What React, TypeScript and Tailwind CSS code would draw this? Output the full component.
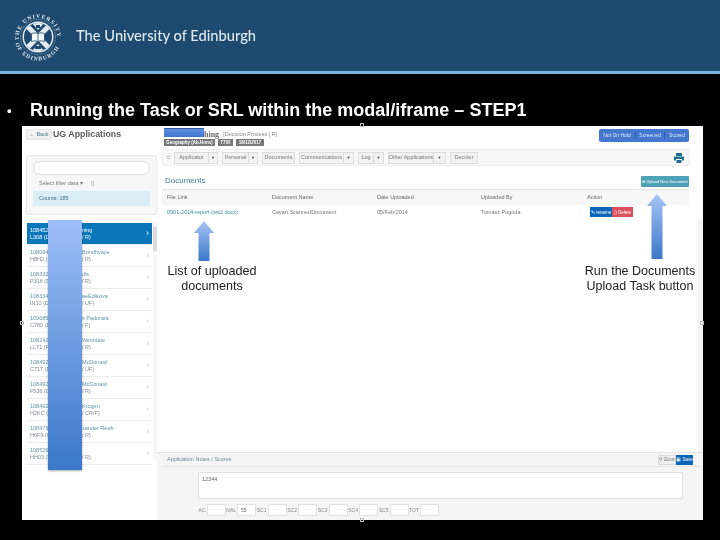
import React from "react";

const rows = [
  ["108452", "ning", "L308 (De", "/ R)"],
  ["1080946", "Bondhyaye", "H8H2 (B", "/ R)"],
  ["1083321", "dis", "P316 (De", "/ R)"],
  ["1083347", "aeEdikova", "IN10 (Di", "/ UF)"],
  ["1096854", "s Padorara", "C780 (De", "/ F)"],
  ["1082423", "Wetzdate", "LL71 (Re", "/ R)"],
  ["1084925", "McDonaid", "C717 (De", "/ UF)"],
  ["1084925", "McDonaid", "F536 (De", "/ R)"],
  ["1084927", "Krogen", "H2KC (D", "/ CR/F)"],
  ["1084736", "xander Reeb", "H6F9 (Ge", "/ R)"],
  ["1085267", "", "HH03 (T", "/ R)"],
];
const tools: { label: string; main: string; drop: string }[] = [
  { label: "Applicator", main: "w-[35px]", drop: "w-[9px]" },
  { label: "Personal", main: "w-[27px]", drop: "w-[9px]" },
  { label: "Documents", main: "w-[33px]", drop: "" },
  { label: "Communications", main: "w-[45px]", drop: "w-[10px]" },
  { label: "Log", main: "w-[16px]", drop: "w-[10px]" },
  { label: "Other Applications", main: "w-[46px]", drop: "w-[12px]" },
  { label: "Decider", main: "w-[28px]", drop: "" },
];
const scores: [string, string][] = [
  ["AC", ""],
  ["NAL", "55"],
  ["SC1", ""],
  ["SC2", ""],
  ["SC3", ""],
  ["SC4", ""],
  ["SC5", ""],
  ["TOT", ""],
];

function Seal() {
  return (
    <svg width="54" height="54" viewBox="0 0 54 54" className="shrink-0 mt-[3px]">
      <defs>
        <path id="sealTop" d="M8 30A19.200 19.200 0 1 1 46 30" />
        <path id="sealBottom" d="M4.400 33.500A23.500 23.500 0 0 0 49.600 33.500" />
        <clipPath id="sealClip"><circle cx="27" cy="27" r="14" /></clipPath>
      </defs>
      <text fontSize="5.600" fontWeight="700" fill="#e3ebf1" fontFamily="'Liberation Serif', serif">
        <textPath href="#sealTop" textLength="62">THE UNIVERSITY</textPath>
      </text>
      <text fontSize="5.600" fontWeight="700" fill="#e3ebf1" fontFamily="'Liberation Serif', serif">
        <textPath href="#sealBottom" textLength="56">OF EDINBURGH</textPath>
      </text>
      <circle cx="27" cy="27" r="17.500" fill="none" stroke="#dfe8ef" strokeWidth="0.5" strokeDasharray="0.8 0.8" />
      <circle cx="27" cy="27" r="15.500" fill="#e6edf2" />
      <g clipPath="url(#sealClip)">
        <rect x="10" y="10" width="34" height="34" fill="#1f4a70" />
        <path d="M11 11L43 43M43 11L11 43" stroke="#e6edf2" strokeWidth="5" />
        <path d="M21 13L27 20L33 13zM21 41L27 34L33 41z" fill="#e6edf2" />
        <path d="M25 15h4v3h-4zM24 36h6v3h-6z" fill="#1f4a70" />
      </g>
      <path d="M20.500 23.500q3.500-1.500 6.500 0q3-1.500 6.500 0v8q-3.500-1.500-6.500 0q-3-1.500-6.500 0z" fill="#f5f8fa" stroke="#1f4a70" strokeWidth="0.8" />
      <path d="M27 23.500v8" stroke="#1f4a70" strokeWidth="0.8" />
    </svg>
  );
}

function Arrow({ className, h }: { className: string; h: number }) {
  return (
    <svg width="20" height={h} viewBox={`0 0 20 ${h}`} className={className}>
      <defs>
        <linearGradient id={`ar${h}`} x1="0" y1="0" x2="0" y2="1">
          <stop offset="0" stopColor="#a6c4f4" />
          <stop offset="1" stopColor="#3c78c8" />
        </linearGradient>
      </defs>
      <path d={`M10 0L20 12H15.500V${h}H4.500V12H0Z`} fill={`url(#ar${h})`} />
    </svg>
  );
}

function Handle({ className }: { className: string }) {
  return <div className={`absolute w-[4px] h-[4px] border border-[#bbb] ${className}`} />;
}

export default function App() {
  return (
    <div className="relative w-[720px] h-[540px] bg-black overflow-hidden font-['Liberation_Sans',sans-serif] blur-[0.3px]">
      <header className="h-[71px] bg-[#1f4a70] flex items-center pl-[11px] gap-[11px]">
        <Seal />
        <span className="font-['Lato',sans-serif] text-[14.700px] text-[#dfe8ef] font-medium">The University of Edinburgh</span>
      </header>
      <div className="h-[3px] bg-[#7db4de]" />
      <div className="h-[52px] pt-[20px] pl-[7px] flex items-center text-white font-bold text-[18px] leading-none">
        <span className="w-[23px] text-[13px]">•</span>
        <span>Running the Task or SRL within the modal/iframe – STEP1</span>
      </div>

      <main className="ml-[22px] w-[681px] h-[394px] bg-white flex text-[#777] text-[5.500px] leading-[7px]">
        {/* left column */}
        <aside className="w-[135px] shrink-0 flex flex-col pl-[4px]">
          <div className="flex items-start gap-[1px] pt-[3px] h-[25px]">
            <span className="w-[26px] h-[11px] bg-[#f2f2f2] border border-[#e5e5e5] rounded-[1px] flex items-center justify-center text-[#4c7f93]">← Back</span>
            <span className="text-[8.800px] leading-[10px] font-bold text-[#5c5c5c]">UG Applications</span>
          </div>
          <div className="mt-[4px] w-[131px] h-[60px] bg-[#f7f7f7] border border-[#e8e8e8] rounded-[2px] px-[6px] pt-[5px] flex flex-col">
            <div className="h-[14px] bg-white border border-[#ddd] rounded-[7px]" />
            <div className="h-[16px] flex items-center gap-[8px] pl-[6px] text-[#777]">
              <span>Select filter data ▾</span>
              <span>▯</span>
            </div>
            <div className="h-[15px] bg-[#d9edf7] flex items-center pl-[6px] text-[#42707f]">Counts: 185</div>
          </div>
          <div className="mt-[8px] flex">
            <div className="w-[125px] ml-[1px]">
              {rows.map((r, i) => (
                <div key={i} className={`h-[22px] flex items-center pl-[3px] pr-[3px] border-b border-[#ececec] ${i === 0 ? "bg-[#0b77bb] text-white" : "text-[#7a8f99]"}`}>
                  <div className="grid grid-cols-[52px_1fr] flex-1">
                    <span className={i === 0 ? "" : "text-[#5f97a8]"}>{r[0]}</span>
                    <span className={i === 0 ? "" : "text-[#5f97a8]"}>{r[1]}</span>
                    <span>{r[2]}</span>
                    <span>{r[3]}</span>
                  </div>
                  <span className={`text-[9px] ${i === 0 ? "text-white" : "text-[#c4c4c4]"}`}>›</span>
                </div>
              ))}
            </div>
            <div className="w-[4px] h-[237px] bg-[#f6f6f6] ml-[1px]">
              <div className="w-[4px] h-[24px] mt-[4px] bg-[#dcdcdc]" />
            </div>
          </div>
        </aside>

        {/* right column */}
        <section className="flex-1 flex flex-col min-w-0">
          <div className="h-[23px] shrink-0 flex justify-between pl-[7px] pr-[14px] pt-[3px]">
            <div className="flex flex-col">
              <div className="h-[10px] pl-[40px] flex items-center text-[#888]">
                <span className="font-['Liberation_Serif',serif] text-[8px] font-bold text-[#666] mr-[4px]">hing</span>
                [Decision Process | R]
              </div>
              <div className="flex gap-[3px]">
                {[["Geography (Ab.Hons)", "w-[51px]"], ["T700", "w-[15px]"], ["18/12/2017", "w-[28px]"]].map(([b, w]) => (
                  <span key={b} className={`h-[7px] ${w} text-center whitespace-nowrap overflow-hidden bg-[#777] text-white text-[4.500px] leading-[7px] font-bold`}>{b}</span>
                ))}
              </div>
            </div>
            <div className="flex h-[13px] bg-[#4478d0] rounded-[2px] text-[#dbe6f7] text-[5px] items-center">
              <span className="w-[37px] text-center border-r border-[#2f5ca8]">Not On Hold</span>
              <span className="w-[29px] text-center border-r border-[#2f5ca8]">Screened</span>
              <span className="w-[24px] text-center">Scored</span>
            </div>
          </div>

          <div className="ml-[5px] mr-[13px] h-[17px] shrink-0 bg-[#f8f8f8] border border-[#eee] rounded-[2px] flex items-center pl-[3px] pr-[5px] gap-[4px] text-[5.500px]">
            <span className="w-[4px] text-[#999] text-[8px]">=</span>
            {tools.map((t) => (
              <span key={t.label} className="flex">
                <span className={`h-[12px] ${t.main} whitespace-nowrap bg-[#f2f2f2] border border-[#ddd] flex items-center justify-center`}>{t.label}</span>
                {t.drop && <span className={`h-[12px] ${t.drop} bg-[#f2f2f2] border border-[#ddd] border-l-0 flex items-center justify-center text-[#444] text-[4px]`}>▼</span>}
              </span>
            ))}
            <svg width="10" height="10" viewBox="0 0 10 10" className="ml-auto">
              <path d="M2 0h6v3H2zM0 3.500h10v4H8V6H2v1.500H0zM2.500 7h5v3h-5z" fill="#1f6f8f" />
            </svg>
          </div>

          <div className="h-[23px] shrink-0 flex items-end justify-between pl-[8px] pr-[14px] pb-[2px]">
            <span className="text-[8px] leading-[12px] text-[#3f7f93]">Documents</span>
            <span className="w-[48px] h-[11px] bg-[#4fa3b8] rounded-[1px] text-white text-[4px] flex items-center justify-center whitespace-nowrap">⊞ Upload New Document</span>
          </div>
          <div className="ml-[5px] mr-[14px] h-[16px] shrink-0 bg-[#f7f7f7] border-t border-[#e5e5e5] grid grid-cols-[105px_105px_104px_106px_1fr] items-center pl-[5px] text-[#666]">
            <span>File Link</span><span>Document Name</span><span>Date Uploaded</span><span>Uploaded By</span><span>Action</span>
          </div>
          <div className="ml-[5px] mr-[14px] h-[14px] shrink-0 grid grid-cols-[105px_105px_104px_106px_1fr] items-center pl-[5px]">
            <span className="text-[#3f8aa0]">0901-2014-report-(sw2.docx)</span>
            <span>Cavari.ScannedDocument</span>
            <span>05/Feb/2014</span>
            <span>Tomasz Pogoda</span>
            <span className="flex ml-[3px] text-white text-[4.500px]">
              <span className="w-[22px] h-[10px] bg-[#0b66b8] flex items-center justify-center">✎ rename</span>
              <span className="w-[21px] h-[10px] bg-[#d9505a] flex items-center justify-center">▯ Delete</span>
            </span>
          </div>

          <div className="flex-1 border-r-[6px] border-[#f5f5f5]" />

          <div className="h-[68px] shrink-0 bg-[#f5f5f5] border-t border-[#e6e6e6] pl-[4px] flex flex-col">
            <div className="h-[14px] shrink-0 border-b border-[#e6e6e6] flex items-center justify-between pl-[6px] pr-[10px]">
              <span className="text-[#6b8a95]">Application Notes / Scores</span>
              <span className="flex text-[4.500px] whitespace-nowrap">
                <span className="w-[18px] h-[10px] bg-[#eee] border border-[#ddd] flex items-center justify-center">⚲ Zoom</span>
                <span className="w-[17px] h-[10px] bg-[#0b66b8] text-white flex items-center justify-center">▣ Save</span>
              </span>
            </div>
            <div className="ml-[37px] mr-[20px] mt-[5px] h-[27px] shrink-0 bg-white border border-[#e2e2e2] rounded-[2px] pl-[3px] pt-[3px] text-[#666]">12344</div>
            <div className="ml-[34px] mt-[5px] flex items-center text-[5px]">
              {scores.map(([l, v]) => (
                <span key={l} className="flex items-center w-[30.500px] justify-end">
                  <span className="mr-[1px] text-[#888]">{l}</span>
                  <span className="h-[12px] w-[19px] shrink-0 bg-white border border-[#e2e2e2] pl-[3px] flex items-center text-[#666]">{v}</span>
                </span>
              ))}
            </div>
          </div>
        </section>
      </main>

      {/* callouts laid over the screenshot */}
      <div className="absolute left-[48px] top-[220px] w-[34px] h-[250px] bg-gradient-to-b from-[#9dbff8] to-[#3a78c8] shadow-[0_1px_2px_rgba(0,0,0,0.35)]" />
      <div className="absolute left-[164px] top-[128px] w-[40px] h-[9px] bg-gradient-to-b from-[#5f90e4] to-[#3f74cc] border-t border-[#2f5aa0]" />
      <Arrow className="absolute left-[194px] top-[221px]" h={40} />
      <Arrow className="absolute left-[647px] top-[194px]" h={65} />
      <div className="absolute left-[142px] top-[264px] w-[140px] text-center text-[12.600px] leading-[15px] text-[#222]">List of uploaded<br />documents</div>
      <div className="absolute left-[570px] top-[264px] w-[140px] text-center text-[12.500px] leading-[15px] text-[#222]">Run the Documents<br />Upload Task button</div>

      <Handle className="left-[360px] top-[123px]" />
      <Handle className="left-[360px] top-[518px]" />
      <Handle className="left-[20px] top-[321px]" />
      <Handle className="left-[700px] top-[321px]" />
    </div>
  );
}
